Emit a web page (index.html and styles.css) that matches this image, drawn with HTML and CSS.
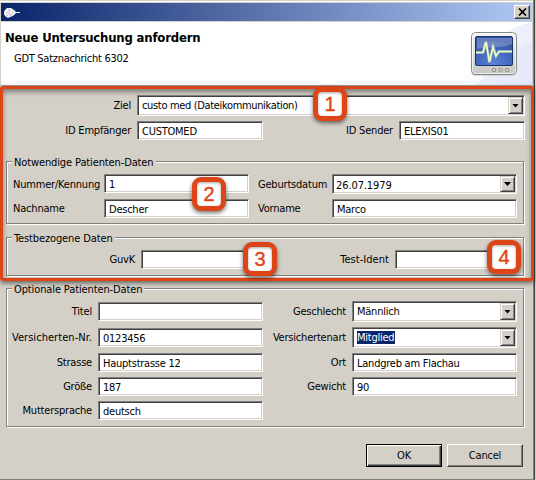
FILE: index.html
```html
<!DOCTYPE html>
<html lang="de">
<head>
<meta charset="utf-8">
<title>Neue Untersuchung anfordern</title>
<link rel="stylesheet" href="styles.css">
</head>
<body>
<div class="window">
  <div class="titlebar">
    <svg class="app-icon" width="18" height="13" viewBox="0 0 18 13"><path d="M1 5L2 3L4 1H8L11 3L13 5H17V6H13L10 9L7 10L5 11L2 9L1 7Z" fill="#f2f2f4"/><path d="M3 6H7M6 8H10M5 3H7M9 5H11" stroke="#b9bdca"/><path d="M6 3.500H8M3 8.500H5" stroke="#e6b9bd"/></svg>
    <div class="close"><svg width="9" height="8" viewBox="0 0 9 8"><path d="M1 .5L8 7.500M8 .5L1 7.500" stroke="#000" stroke-width="1.700"/></svg></div>
  </div>
  <header class="header">
    <div class="heading"><h1>Neue Untersuchung anfordern</h1><p>GDT Satznachricht 6302</p></div>
    <svg class="monitor" width="76" height="63" viewBox="0 0 76 63">
      <defs>
        <linearGradient id="case" x1="0" y1="0" x2="0" y2="1"><stop offset="0" stop-color="#f5f5f2"/><stop offset="1" stop-color="#c6c7c0"/></linearGradient>
        <radialGradient id="screen" cx=".5" cy=".9" r=".8"><stop offset="0" stop-color="#5a82dc"/><stop offset="1" stop-color="#3453a6"/></radialGradient>
        <linearGradient id="swoosh" x1="0" y1="0" x2="1" y2="0"><stop offset="0" stop-color="#fff"/><stop offset="1" stop-color="#e6eafa"/></linearGradient>
      </defs>
      <path d="M0 63C22 48 40 3 76 1V63Z" fill="url(#swoosh)" opacity=".8"/>
      <path d="M22 63C36 42 48 23 76 21V63Z" fill="#dde3f8" opacity=".5"/>
      <rect x="16" y="49" width="43" height="5" rx="3" fill="#b9bbc5" opacity=".55"/>
      <rect x="15.500" y="10.500" width="45" height="42" rx="4" fill="url(#case)" stroke="#858781"/>
      <rect x="16.500" y="11.500" width="43" height="40" rx="3" fill="none" stroke="#fff" opacity=".7"/>
      <rect x="19.500" y="14.500" width="37" height="29" rx="1.500" fill="url(#screen)" stroke="#1d3470"/>
      <path d="M21 16H56V22C45 27 34 24 21 27Z" fill="#fff" opacity=".25"/>
      <path d="M20 30.500H27L30 20L33.500 40L37 25L40 34L43 29.500H56" fill="none" stroke="#c9ebae" stroke-width="3" opacity=".45"/>
      <path d="M20 30.500H27L30 20L33.500 40L37 25L40 34L43 29.500H56" fill="none" stroke="#efffc4" stroke-width="1.600"/>
      <g fill="#d8d9d3" stroke="#8b8d87"><circle cx="38" cy="48" r="1.700"/><circle cx="44.500" cy="48" r="1.700"/><circle cx="51" cy="48" r="1.700"/></g>
    </svg>
  </header>
  <main class="content">
    <section class="grid target">
      <label>Ziel</label><div class="field combo wide">custo med (Dateikommunikation)<i></i></div>
      <label>ID Empfänger</label><div class="field">CUSTOMED</div><label>ID Sender</label><div class="field">ELEXIS01</div>
    </section>
    <section class="group required">
      <h2>Notwendige Patienten-Daten</h2>
      <div class="grid">
        <label>Nummer/Kennung</label><div class="field">1</div><label>Geburtsdatum</label><div class="field combo date">26.07.1979<i></i></div>
        <label>Nachname</label><div class="field">Descher</div><label>Vorname</label><div class="field">Marco</div>
      </div>
    </section>
    <section class="group test">
      <h2>Testbezogene Daten</h2>
      <div class="grid"><label>GuvK</label><div class="field"></div><label class="loose">Test-Ident</label><div class="field"></div></div>
    </section>
    <section class="group optional">
      <h2>Optionale Patienten-Daten</h2>
      <div class="grid">
        <label>Titel</label><div class="field"></div><label>Geschlecht</label><div class="field combo">Männlich<i></i></div>
        <label class="loose">Versicherten-Nr.</label><div class="field">0123456</div><label>Versichertenart</label><div class="field combo"><mark>Mitglied</mark><i></i></div>
        <label>Strasse</label><div class="field">Hauptstrasse 12</div><label>Ort</label><div class="field">Landgreb am Flachau</div>
        <label>Größe</label><div class="field">187</div><label>Gewicht</label><div class="field">90</div>
        <label>Muttersprache</label><div class="field">deutsch</div>
      </div>
    </section>
    <footer class="actions"><div class="button default">OK</div><div class="button">Cancel</div></footer>
  </main>
  <div class="highlight"></div>
  <div class="badge b1">1</div><div class="badge b2">2</div><div class="badge b3">3</div><div class="badge b4">4</div>
</div>
</body>
</html>
```

FILE: styles.css
```css
* { box-sizing: border-box; }
body { margin: 0; background: #d0d0d0; font: 11px/13px "DejaVu Sans Condensed", "DejaVu Sans", sans-serif; font-stretch: condensed; letter-spacing: -.2px; color: #000; overflow: hidden; }
h1, h2, p { margin: 0; font-weight: normal; }
.window { position: relative; width: 535px; height: 480px; background: #d4d0c8; border-right: 1px solid #404040; border-bottom: 1px solid #808080; box-shadow: inset -1px 0 #808080, inset 0 1px #d4d0c8, inset 0 2px #fff; padding: 3px 2px 0 1px; display: flex; flex-direction: column; }
.titlebar { height: 18px; background: linear-gradient(90deg, #0a246a, #b1c9f5); display: flex; align-items: flex-start; justify-content: space-between; padding: 2px 2px 0 2px; flex: none; }
.app-icon { margin-top: 2px; }
.close { width: 16px; height: 14px; background: #d4d0c8; border: 1px solid; border-color: #fff #404040 #404040 #fff; box-shadow: inset -1px -1px #808080; display: flex; align-items: center; justify-content: center; }
.header { height: 64px; margin-top: 1px; background: #fff; border-bottom: 1px solid #a5a39d; display: flex; justify-content: space-between; flex: none; }
.heading { padding: 8px 0 0 4px; }
h1 { font: bold 13px/16px "DejaVu Sans Condensed", "DejaVu Sans", sans-serif; font-stretch: condensed; letter-spacing: -.18px; }
.heading p { padding: 6px 0 0 9px; letter-spacing: -.28px; }
.content { padding: 9px 8px 0 5px; display: flex; flex-direction: column; }
.grid { display: grid; align-items: center; }
label { text-align: right; white-space: nowrap; padding-right: 6px; }
label.loose { letter-spacing: .05px; }
.field { background: #fff; height: 19px; border: 1px solid; border-color: #808080 #fff #fff #808080; box-shadow: inset 1px 1px #404040, inset -1px -1px #d4d0c8; padding: 3px 0 0 4px; white-space: nowrap; letter-spacing: -.24px; }
.combo { height: 21px; display: flex; justify-content: space-between; padding: 3px 1px 1px 4px; }
.combo i { width: 15px; margin-top: -2px; height: 17px; background: #d4d0c8; border: 1px solid; border-color: #d4d0c8 #404040 #404040 #d4d0c8; box-shadow: inset 1px 1px #fff, inset -1px -1px #808080; display: flex; align-items: center; justify-content: center; }
.combo i::before { content: ""; width: 7px; height: 4px; background: #000; clip-path: polygon(0 0, 100% 0, 50% 100%); }
.target { grid-template-columns: 131px 126px 136px 126px; grid-template-rows: 21px 19px; row-gap: 5px; height: 66px; align-content: start; }
.wide { grid-column: span 3; letter-spacing: -.34px; }
.group { width: 518px; border: 1px solid #808080; box-shadow: 1px 1px #fff, inset 1px 1px #fff; flex: none; }
.group h2 { font-size: 11px; line-height: 13px; height: 13px; width: max-content; margin: -6px 0 0 5px; padding: 0 2px; background: #d4d0c8; letter-spacing: -.12px; }
.required { height: 63px; }
.required .grid { grid-template-columns: 97px 145px 83px 185px; grid-template-rows: 20px 19px; row-gap: 5px; margin-top: 5px; }
.required .field { align-self: start; }
.required label { text-align: left; padding-left: 6px; }
.required label:nth-of-type(even) { padding-left: 9px; }
.combo.date { height: 20px; padding-left: 3px; padding-top: 4px; letter-spacing: -.1px; }
.combo.date i { margin-top: -3px; height: 16px; }
.test { height: 39px; margin-top: 13px; }
.test .grid { grid-template-columns: 134px 122px 132px 122px; margin-top: 5px; }
.optional { height: 139px; margin-top: 12px; }
.optional .grid { grid-template-columns: 91px 165px 89px 165px; grid-template-rows: 21px 21px 19px 19px 19px; row-gap: 5px; margin-top: 5px; }
mark { background: #0a246a; color: #fff; height: 13px; padding-right: 1px; }
.actions { display: flex; justify-content: flex-end; gap: 5px; padding: 17px 1px 0 0; }
.button { width: 76px; height: 23px; border: 1px solid; border-color: #fff #404040 #404040 #fff; box-shadow: inset -1px -1px #808080; display: flex; align-items: center; justify-content: center; }
.default { border-color: #000; box-shadow: inset 1px 1px #fff, inset -1px -1px #404040, inset -2px -2px #808080; }
.highlight { position: absolute; left: 0; top: 86px; width: 534px; height: 195px; border: 3px solid #dd4517; border-radius: 3px; box-shadow: 0 2px 5px rgba(0,0,0,.55), inset 0 3px 5px rgba(0,0,0,.4); }
.badge { position: absolute; width: 34px; height: 34px; background: #fff; border: 5px solid #dd4517; border-radius: 9px; box-shadow: 0 2px 4px rgba(0,0,0,.55), inset 0 1px 3px rgba(0,0,0,.35); color: #dd4517; font: 20px/24px "Liberation Sans", Arial, sans-serif; letter-spacing: 0; text-align: center; -webkit-text-stroke: .4px #dd4517; }
.b1 { left: 313px; top: 87px; }
.b2 { left: 192px; top: 177px; }
.b3 { left: 243px; top: 242px; }
.b4 { left: 487px; top: 240px; }
```
